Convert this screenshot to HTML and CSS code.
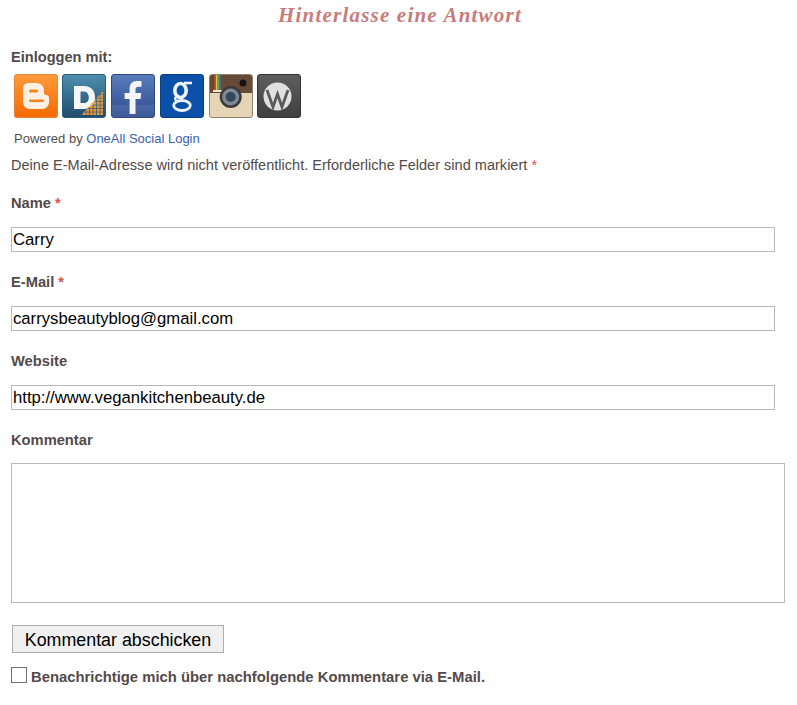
FILE: index.html
```html
<!DOCTYPE html>
<html lang="de">
<head>
<meta charset="utf-8">
<title>Hinterlasse eine Antwort</title>
<link rel="stylesheet" href="styles.css">
</head>
<body>
<main class="respond">
  <h3 class="title">Hinterlasse eine Antwort</h3>
  <p class="login-label">Einloggen mit:</p>
  <div class="providers">
    <a class="provider p-blogger" href="#" aria-label="Blogger"><svg viewBox="0 0 44 44" width="44" height="44">
      <defs><linearGradient id="gb" x1="0" y1="0" x2="0" y2="1"><stop offset="0" stop-color="#ff9a3c"/><stop offset="1" stop-color="#f56a00"/></linearGradient></defs>
      <rect x=".5" y=".5" width="43" height="43" rx="2" fill="url(#gb)" stroke="#e8843a"/>
      <path d="M15 9h7c5 0 8 3 8 8v2c0 1.300 1 2 2 2 2 0 3 1 3 3v4c0 4-3 7-7 7H16c-4 0-7-3-7-7V15c0-4 2-6 6-6z" fill="#fdf0e4"/>
      <rect x="15" y="15.500" width="9" height="3" rx="1.500" fill="#f58220"/>
      <rect x="15" y="25.500" width="15" height="2.500" rx="1.200" fill="#f58220"/>
    </svg></a>
    <a class="provider p-digg" href="#" aria-label="Disqus"><svg viewBox="0 0 44 44" width="44" height="44">
      <defs>
        <linearGradient id="gd" x1="0" y1="0" x2="0" y2="1"><stop offset="0" stop-color="#4f8fae"/><stop offset="1" stop-color="#1e4c6c"/></linearGradient>
        <pattern id="dots" width="3.500" height="3.500" patternUnits="userSpaceOnUse"><rect width="2.800" height="2.800" fill="#e8973a"/></pattern>
      </defs>
      <rect x=".5" y=".5" width="43" height="43" rx="2.500" fill="url(#gd)" stroke="#2b5a78"/>
      <path fill-rule="evenodd" d="M12 12h10c7.500 0 11 5 11 11.500S29 35 22 35H12zM18.500 17.500V29H22c3.300 0 4.800-2.500 4.800-5.500s-1.500-6-4.800-6z" fill="#f4f6f8"/>
      <path d="M19 41l22-24v24z" fill="url(#dots)"/>
    </svg></a>
    <a class="provider p-facebook" href="#" aria-label="Facebook"><svg viewBox="0 0 44 44" width="44" height="44">
      <defs><linearGradient id="gf" x1="0" y1="0" x2="0" y2="1"><stop offset="0" stop-color="#5b7dbb"/><stop offset=".7" stop-color="#3a5a9c"/><stop offset=".71" stop-color="#4a68a6"/><stop offset="1" stop-color="#3d5a98"/></linearGradient></defs>
      <rect x=".5" y=".5" width="43" height="43" rx="2.500" fill="url(#gf)" stroke="#2f4a80"/>
      <path d="M24.500 40V25h5l.8-6h-5.800v-3.500c0-1.800.6-2.800 3-2.800h3V7.300c-.6-.1-2.400-.3-4.400-.3-4.500 0-7.500 2.700-7.500 7.800V19h-5v6h5v15z" fill="#f4f6fb"/>
    </svg></a>
    <a class="provider p-google" href="#" aria-label="Google"><svg viewBox="0 0 44 44" width="44" height="44">
      <rect x=".5" y=".5" width="43" height="43" rx="2.500" fill="#0a50a8" stroke="#0a3f86"/>
      <g fill="none" stroke="#eef4fb">
        <ellipse cx="20.500" cy="16.500" rx="5.700" ry="7" stroke-width="3.600"/>
        <path d="M24 9h8" stroke-width="2.600"/>
        <path d="M16.500 22.500c-2.500 2-1.500 3.500 1 4.200" stroke-width="2.400"/>
        <ellipse cx="22" cy="31.500" rx="8.300" ry="5" stroke-width="2.800"/>
      </g>
    </svg></a>
    <a class="provider p-instagram" href="#" aria-label="Instagram"><svg viewBox="0 0 44 44" width="44" height="44">
      <rect x=".5" y=".5" width="43" height="43" rx="2.500" fill="#e3d5b5" stroke="#94816a"/>
      <path d="M1 3a2 2 0 0 1 2-2h38a2 2 0 0 1 2 2v16H1z" fill="#664a38"/>
      <rect x="5.500" y="1" width="1.500" height="15" fill="#d9413a"/>
      <rect x="7" y="1" width="1.500" height="15" fill="#ecc13c"/>
      <rect x="8.500" y="1" width="1.500" height="15" fill="#5aa55a"/>
      <rect x="10" y="1" width="1.500" height="15" fill="#3f74b5"/>
      <rect x="4" y="16" width="9" height="2" fill="#f1e8d3"/>
      <circle cx="21.700" cy="23" r="11" fill="#3b3a3a"/>
      <circle cx="21.700" cy="23" r="8.500" fill="#7e8890"/>
      <circle cx="21.700" cy="23" r="5" fill="#31475c"/>
      <circle cx="34" cy="9" r="3.500" fill="#16120f"/>
    </svg></a>
    <a class="provider p-wordpress" href="#" aria-label="WordPress"><svg viewBox="0 0 44 44" width="44" height="44">
      <defs><linearGradient id="gw" x1="0" y1="0" x2="0" y2="1"><stop offset="0" stop-color="#5e5e5e"/><stop offset="1" stop-color="#3f3f3f"/></linearGradient></defs>
      <rect x=".5" y=".5" width="43" height="43" rx="2.500" fill="url(#gw)" stroke="#333"/>
      <circle cx="20.500" cy="22.500" r="14" fill="#e0e0e0"/>
      <path d="M10 16l6 17 4.500-13 4.500 13 6-17" fill="none" stroke="#5a5a5a" stroke-width="2.800"/>
    </svg></a>
  </div>
  <p class="powered">Powered by <a class="powered-link" href="#">OneAll Social Login</a></p>
  <p class="notes">Deine E-Mail-Adresse wird nicht veröffentlicht. Erforderliche Felder sind markiert <span class="req">*</span></p>
  <form class="comment-form">
    <div class="field">
      <label class="field-label" for="author">Name <span class="req">*</span></label>
      <input class="text-input" id="author" type="text" value="Carry">
    </div>
    <div class="field">
      <label class="field-label" for="email">E-Mail <span class="req">*</span></label>
      <input class="text-input" id="email" type="text" value="carrysbeautyblog@gmail.com">
    </div>
    <div class="field">
      <label class="field-label" for="url">Website</label>
      <input class="text-input" id="url" type="text" value="http://www.vegankitchenbeauty.de">
    </div>
    <div class="field">
      <label class="field-label" for="comment">Kommentar</label>
      <textarea class="text-area" id="comment"></textarea>
    </div>
    <button class="submit" type="button">Kommentar abschicken</button>
    <label class="subscribe"><span class="check"></span>Benachrichtige mich über nachfolgende Kommentare via E-Mail.</label>
  </form>
</main>
</body>
</html>
```
FILE: styles.css
```css
html, body {
  margin: 0;
  padding: 0;
  background: #fff;
}

body {
  width: 797px;
  height: 705px;
  overflow: hidden;
  font-family: "Liberation Sans", Arial, sans-serif;
  font-size: 14px;
  color: #534a4a;
}

.respond {
  display: flex;
  flex-direction: column;
  padding: 0 12px 0 11px;
}

.title {
  margin: 3px 0 0;
  width: 778px;
  height: 24px;
  line-height: 24px;
  text-align: center;
  font-family: "Liberation Serif", serif;
  font-style: italic;
  font-weight: bold;
  font-size: 21px;
  letter-spacing: 1.2px;
  color: #c77c7c;
}

.login-label {
  margin: 21px 0 0;
  height: 18px;
  line-height: 18px;
  font-weight: bold;
  font-size: 14.600px;
}

.providers {
  display: flex;
  margin: 8px 0 0 3px;
  gap: 5px;
}

.provider {
  display: block;
  width: 44px;
  height: 44px;
}

.provider svg {
  display: block;
}

.p-blogger,
.p-instagram {
  margin-right: -1px;
}

.powered {
  margin: 13px 0 0 3px;
  height: 16px;
  line-height: 16px;
  font-size: 13px;
}

.powered-link {
  color: #3b60a8;
  text-decoration: none;
}

.notes {
  margin: 9px 0 0;
  height: 18px;
  line-height: 18px;
  font-size: 14.560px;
}

.req {
  color: #d9534a;
}

.comment-form {
  display: flex;
  flex-direction: column;
  align-items: flex-start;
}

.field {
  display: flex;
  flex-direction: column;
  align-items: flex-start;
  margin-top: 20px;
  width: 100%;
}

.field + .field {
  margin-top: 21px;
}

.field-label {
  display: block;
  height: 18px;
  line-height: 18px;
  font-weight: bold;
  font-size: 14.700px;
}

.text-input {
  box-sizing: border-box;
  display: block;
  width: 764px;
  height: 25px;
  margin: 15px 0 0;
  padding: 1px;
  border: 1px solid #b9b9b9;
  background: #fff;
  color: #000;
  font-family: "Liberation Sans", Arial, sans-serif;
  font-size: 16.700px;
  outline: none;
  border-radius: 0;
}

.text-area {
  box-sizing: border-box;
  display: block;
  width: 774px;
  height: 140px;
  margin: 14px 0 0;
  padding: 2px;
  border: 1px solid #b9b9b9;
  background: #fff;
  resize: none;
  outline: none;
  border-radius: 0;
}

.submit {
  box-sizing: border-box;
  width: 212px;
  height: 28px;
  margin: 22px 0 0 1px;
  padding: 2px 0 0;
  border: 1px solid #adadad;
  background: #f0f0f0;
  color: #000;
  font-family: "Liberation Sans", Arial, sans-serif;
  font-size: 17.850px;
  border-radius: 0;
}

.subscribe {
  display: flex;
  align-items: center;
  margin-top: 15px;
  height: 18px;
  line-height: 18px;
  font-weight: bold;
  font-size: 14.830px;
}

.check {
  box-sizing: border-box;
  display: block;
  width: 16px;
  height: 16px;
  margin: 0 4px 4px 0;
  border: 1px solid #707070;
  background: #fff;
}
```
